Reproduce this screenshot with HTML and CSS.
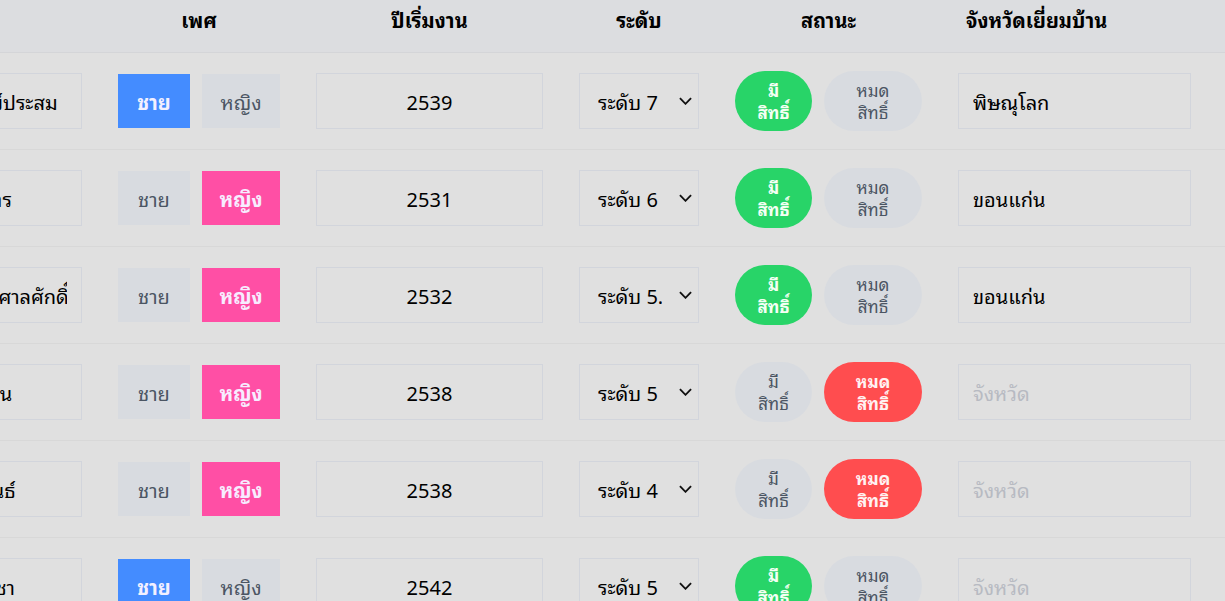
FILE: index.html
```html
<!DOCTYPE html>
<html lang="th">
<head>
<meta charset="utf-8">
<title>รายชื่อ</title>
<link rel="stylesheet" href="styles.css">
</head>
<body>
<div class="viewport">
<table class="grid">
  <colgroup>
    <col class="c-name"><col class="c-sex"><col class="c-year"><col class="c-level"><col class="c-status"><col class="c-prov">
  </colgroup>
  <thead>
    <tr>
      <th>ชื่อ</th>
      <th>เพศ</th>
      <th>ปีเริ่มงาน</th>
      <th>ระดับ</th>
      <th>สถานะ</th>
      <th class="th-prov">จังหวัดเยี่ยมบ้าน</th>
    </tr>
  </thead>
  <tbody>
    <tr>
      <td><input class="field name" value="นางกมลา ทรัพย์ประสม"></td>
      <td><div class="seg"><button class="sex m on-m">ชาย</button><button class="sex f">หญิง</button></div></td>
      <td><input class="field year" value="2539"></td>
      <td><div class="sel"><select><option>ระดับ 7</option></select><svg viewBox="0 0 14 8"><path d="M1 1l6 6 6-6"/></svg></div></td>
      <td><div class="seg"><button class="pill p-has on-g">มี<br>สิทธิ์</button><button class="pill p-no">หมด<br>สิทธิ์</button></div></td>
      <td><input class="field prov" value="พิษณุโลก" placeholder="จังหวัด"></td>
    </tr>
    <tr>
      <td><input class="field name" value="นายชาย ศรีสุนทร"></td>
      <td><div class="seg"><button class="sex m">ชาย</button><button class="sex f on-f">หญิง</button></div></td>
      <td><input class="field year" value="2531"></td>
      <td><div class="sel"><select><option>ระดับ 6</option></select><svg viewBox="0 0 14 8"><path d="M1 1l6 6 6-6"/></svg></div></td>
      <td><div class="seg"><button class="pill p-has on-g">มี<br>สิทธิ์</button><button class="pill p-no">หมด<br>สิทธิ์</button></div></td>
      <td><input class="field prov" value="ขอนแก่น" placeholder="จังหวัด"></td>
    </tr>
    <tr>
      <td><input class="field name" value="นายประสิทธิ์ ไพศาลศักดิ์"></td>
      <td><div class="seg"><button class="sex m">ชาย</button><button class="sex f on-f">หญิง</button></div></td>
      <td><input class="field year" value="2532"></td>
      <td><div class="sel"><select><option>ระดับ 5.5</option></select><svg viewBox="0 0 14 8"><path d="M1 1l6 6 6-6"/></svg></div></td>
      <td><div class="seg"><button class="pill p-has on-g">มี<br>สิทธิ์</button><button class="pill p-no">หมด<br>สิทธิ์</button></div></td>
      <td><input class="field prov" value="ขอนแก่น" placeholder="จังหวัด"></td>
    </tr>
    <tr>
      <td><input class="field name" value="นายดี แก้วบุญชื่น"></td>
      <td><div class="seg"><button class="sex m">ชาย</button><button class="sex f on-f">หญิง</button></div></td>
      <td><input class="field year" value="2538"></td>
      <td><div class="sel"><select><option>ระดับ 5</option></select><svg viewBox="0 0 14 8"><path d="M1 1l6 6 6-6"/></svg></div></td>
      <td><div class="seg"><button class="pill p-has">มี<br>สิทธิ์</button><button class="pill p-no on-r">หมด<br>สิทธิ์</button></div></td>
      <td><input class="field prov" value="" placeholder="จังหวัด"></td>
    </tr>
    <tr>
      <td><input class="field name" value="นางวรรณ ศรีพันธ์"></td>
      <td><div class="seg"><button class="sex m">ชาย</button><button class="sex f on-f">หญิง</button></div></td>
      <td><input class="field year" value="2538"></td>
      <td><div class="sel"><select><option>ระดับ 4</option></select><svg viewBox="0 0 14 8"><path d="M1 1l6 6 6-6"/></svg></div></td>
      <td><div class="seg"><button class="pill p-has">มี<br>สิทธิ์</button><button class="pill p-no on-r">หมด<br>สิทธิ์</button></div></td>
      <td><input class="field prov" value="" placeholder="จังหวัด"></td>
    </tr>
    <tr>
      <td><input class="field name" value="นายธนพล มั่นวิชา"></td>
      <td><div class="seg"><button class="sex m on-m">ชาย</button><button class="sex f">หญิง</button></div></td>
      <td><input class="field year" value="2542"></td>
      <td><div class="sel"><select><option>ระดับ 5</option></select><svg viewBox="0 0 14 8"><path d="M1 1l6 6 6-6"/></svg></div></td>
      <td><div class="seg"><button class="pill p-has on-g">มี<br>สิทธิ์</button><button class="pill p-no">หมด<br>สิทธิ์</button></div></td>
      <td><input class="field prov" value="" placeholder="จังหวัด"></td>
    </tr>
  </tbody>
</table>
</div>
</body>
</html>
```

FILE: styles.css
```css
* { box-sizing: border-box; }
html, body { margin: 0; padding: 0; }
body {
  background: #e0e0e0;
  font-family: "Leelawadee UI", Tahoma, "Noto Sans Thai Looped", "Noto Sans Thai", "Noto Sans", sans-serif;
  color: #000;
  overflow: hidden;
}
.viewport {
  width: 1225px;
  height: 601px;
  overflow: hidden;
}
.grid {
  border-collapse: collapse;
  table-layout: fixed;
  width: 1400px;
  margin-left: -160px;
}
.c-name { width: 260px; }
.c-sex { width: 198px; }
.c-year { width: 263px; }
.c-level { width: 156px; }
.c-status { width: 223px; }
.c-prov { width: 300px; }

thead th {
  background: #dcdde0;
  height: 52px;
  padding: 0 18px 14px;
  font-size: 20px;
  font-weight: 700;
  text-align: center;
  border-bottom: 1px solid #d4d5d8;
  white-space: nowrap;
}
thead th.th-prov { text-align: left; padding-left: 26px; }

tbody td {
  padding: 18px;
  height: 97px;
  border-bottom: 1px solid #d8d8d8;
  vertical-align: middle;
}

.field {
  display: block;
  width: 100%;
  height: 56px;
  border: 1px solid #d2d5dc;
  background: transparent;
  font: inherit;
  font-size: 20px;
  color: #000;
  padding: 0 14px;
  outline: none;
}
.field.prov { width: 233px; }
.field.year { text-align: center; }
.field::placeholder { color: #b7bac2; }

.seg { display: flex; gap: 12px; align-items: center; }

.sex {
  height: 54px;
  border: 0;
  padding: 0;
  font: inherit;
  font-size: 20px;
  background: #d8dbe0;
  color: #4b5563;
}
.sex.m { width: 72px; }
.sex.f { width: 78px; }
.sex.on-m { background: #448cff; color: #f3f0ff; font-weight: 700; }
.sex.on-f { background: #ff4fa5; color: #f7ecff; font-weight: 700; }

.sel { position: relative; width: 120px; }
.sel select {
  -webkit-appearance: none;
  appearance: none;
  display: block;
  width: 120px;
  height: 56px;
  border: 1px solid #d2d5dc;
  background: transparent;
  font: inherit;
  font-size: 20px;
  color: #000;
  padding: 0 36px 0 18px;
  outline: none;
}
.sel svg {
  position: absolute;
  right: 7px;
  top: 24px;
  width: 13px;
  height: 8px;
  fill: none;
  stroke: #111;
  stroke-width: 2;
  pointer-events: none;
}

.pill {
  height: 60px;
  border: 0;
  border-radius: 30px;
  font: inherit;
  font-size: 17px;
  line-height: 22px;
  background: #d8dbe0;
  color: #4b5563;
  padding: 0;
}
.pill.p-has { width: 77px; }
.pill.p-no { width: 98px; }
.pill.on-g { background: #28d468; color: #f4fff4; font-weight: 700; }
.pill.on-r { background: #ff4d4f; color: #fff2f2; font-weight: 700; }
```
